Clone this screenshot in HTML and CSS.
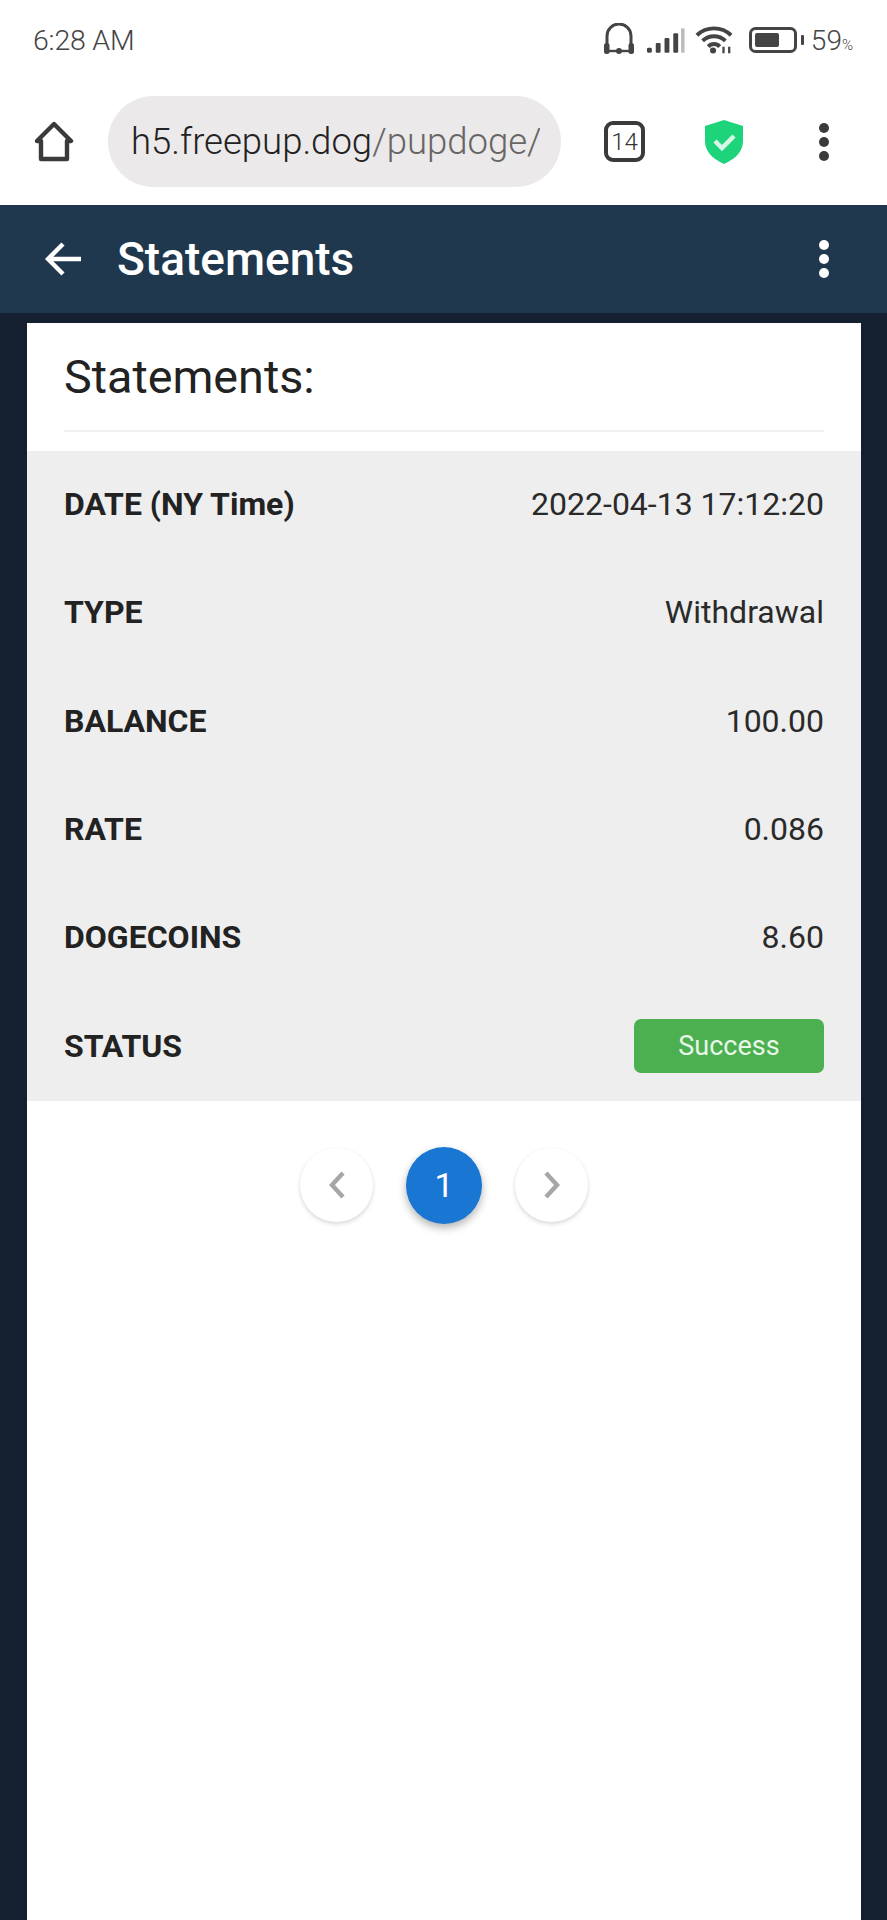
FILE: index.html
```html
<!DOCTYPE html>
<html lang="en">
<head>
<meta charset="utf-8">
<title>Statements</title>
<link rel="stylesheet" href="styles.css">
</head>
<body>
<div class="status">
  <span class="time">6:28 AM</span>
  <div class="status-icons">
    <svg class="i-head" viewBox="0 0 32 32"><path d="M4 27V13a12 12 0 0 1 24 0v14" fill="none" stroke="#444" stroke-width="3"/><path d="M4 28h24" stroke="#444" stroke-width="2.4"/><rect x="1" y="20" width="5.5" height="11" rx="2.5" fill="#444"/><rect x="25.5" y="20" width="5.5" height="11" rx="2.5" fill="#444"/><circle cx="16" cy="28" r="3" fill="#444"/></svg>
    <svg class="i-sig" viewBox="0 0 40 26"><g fill="#444"><rect x="1" y="20" width="5" height="5" rx="1.5"/><rect x="10" y="15" width="5" height="10" rx="1"/><rect x="19" y="10" width="5" height="15" rx="1"/><rect x="28" y="5" width="5" height="20" rx="1"/></g><rect x="36" y="0" width="3.5" height="25" fill="#bbb"/></svg>
    <svg class="i-wifi" viewBox="0 0 40 30"><g fill="none" stroke="#444" stroke-width="4.2"><path d="M2 10a26 26 0 0 1 36 0"/><path d="M8 16a17 17 0 0 1 24 0"/><path d="M14 22a8 8 0 0 1 12 0"/></g><circle cx="19" cy="26" r="3.2" fill="#444"/><path d="M30 22v7M36 22v7" stroke="#444" stroke-width="2.4"/></svg>
    <svg class="i-batt" viewBox="0 0 56 26"><rect x="1.5" y="1.5" width="45" height="23" rx="5" fill="none" stroke="#444" stroke-width="3"/><rect x="6" y="6" width="24" height="14" rx="2" fill="#444"/><rect x="52" y="8" width="3" height="10" rx="1" fill="#444"/></svg>
    <span class="pct">59<small>%</small></span>
  </div>
</div>
<div class="toolbar">
  <svg class="i-home" viewBox="0 0 42 42"><path d="M4 20 21 3l17 17h-4v18H8V20z" fill="none" stroke="#3a3a3a" stroke-width="4.4" stroke-linejoin="round"/></svg>
  <div class="url"><span class="url-inner"><span class="host">h5.freepup.dog</span><span class="path">/pupdoge/</span></span></div>
  <div class="tabs">14</div>
  <svg class="i-shield" viewBox="0 0 42 46"><path d="M21 1 40 7v15c0 11-8 18-19 23C10 40 2 33 2 22V7z" fill="#1ed47b"/><path d="m12 22 7 7 12-12" fill="none" stroke="#d9f7e8" stroke-width="4.5"/></svg>
  <svg class="i-dots" viewBox="0 0 12 38"><circle cx="6" cy="5" r="5" fill="#3a3a3a"/><circle cx="6" cy="19" r="5" fill="#3a3a3a"/><circle cx="6" cy="33" r="5" fill="#3a3a3a"/></svg>
</div>
<header class="appbar">
  <svg class="i-back" viewBox="0 0 38 34"><path d="M36 17H4M18 2 3 17l15 15" fill="none" stroke="#fff" stroke-width="4.4"/></svg>
  <h1 class="appbar-title">Statements</h1>
  <svg class="i-dots-w" viewBox="0 0 12 38"><circle cx="6" cy="5" r="5" fill="#fff"/><circle cx="6" cy="19" r="5" fill="#fff"/><circle cx="6" cy="33" r="5" fill="#fff"/></svg>
</header>
<main class="content">
  <section class="card">
    <div class="card-head"><h2 class="card-title">Statements:</h2></div>
    <div class="rows">
      <div class="row"><span class="label">DATE (NY Time)</span><span class="value">2022-04-13 17:12:20</span></div>
      <div class="row"><span class="label">TYPE</span><span class="value">Withdrawal</span></div>
      <div class="row"><span class="label">BALANCE</span><span class="value">100.00</span></div>
      <div class="row"><span class="label">RATE</span><span class="value">0.086</span></div>
      <div class="row"><span class="label">DOGECOINS</span><span class="value">8.60</span></div>
      <div class="row"><span class="label">STATUS</span><span class="badge">Success</span></div>
    </div>
    <nav class="pager">
      <span class="page-btn"><svg class="chev" viewBox="0 0 18 28"><path d="M15 2 4 14l11 12" fill="none" stroke="#a6a6a6" stroke-width="4.4"/></svg></span>
      <span class="page-now">1</span>
      <span class="page-btn"><svg class="chev" viewBox="0 0 18 28"><path d="m3 2 11 12L3 26" fill="none" stroke="#a6a6a6" stroke-width="4.4"/></svg></span>
    </nav>
  </section>
</main>
</body>
</html>
```
FILE: styles.css
```css
* { box-sizing: border-box; }
html, body { margin: 0; padding: 0; }
body { width: 887px; height: 1920px; overflow: hidden; background: #14202f; font-family: Roboto, "Liberation Sans", sans-serif; display: flex; flex-direction: column; }
.status { height: 80px; background: #fff; display: flex; justify-content: space-between; align-items: center; padding: 0 34px 0 33px; color: #444; }
.time { font-size: 28.5px; letter-spacing: -.2px; font-weight: 300; }
.status-icons { display: flex; align-items: center; }
.i-head { width: 32px; height: 32px; margin-right: 11px; margin-top: -2px; }
.i-sig { width: 39px; height: 26px; margin-right: 10px; margin-top: 2px; }
.i-wifi { width: 38px; height: 30px; margin-right: 16px; }
.i-batt { width: 56px; height: 26px; margin-right: 6px; }
.pct { font-size: 28px; font-weight: 300; }
.pct small { font-size: 15px; }
.toolbar { height: 125px; background: #fff; display: flex; align-items: center; padding: 0 0 2px 33px; }
.i-home { width: 42px; height: 42px; margin-right: 33px; }
.url { width: 453px; height: 91px; background: #ebe9e9; border-radius: 46px; padding: 0 21px 0 23px; display: flex; align-items: center; margin-right: 43px; }
.url-inner { display: block; overflow: hidden; white-space: nowrap; font-size: 36.5px; font-weight: 300; }
.host { color: #222; }
.path { color: #666; }
.tabs { width: 41px; height: 41px; border: 4px solid #3a3a3a; border-radius: 9px; font-size: 24px; font-weight: 300; color: #333; display: flex; align-items: center; justify-content: center; margin-right: 58px; }
.i-shield { width: 42px; height: 46px; margin-right: 73px; }
.i-dots { width: 12px; height: 38px; }
.appbar { height: 108px; background: #20384e; display: flex; align-items: center; padding: 0 33px 0 45px; }
.i-back { width: 38px; height: 34px; margin-right: 34px; }
.appbar-title { margin: 0; font-size: 46px; font-weight: 500; color: #fff; flex: 1; }
.i-dots-w { width: 12px; height: 38px; margin-right: 24px; }
.content { flex: 1; padding: 10px 26px 0 27px; min-height: 0; }
.card { background: #fff; height: 100%; }
.card-head { margin: 0 37px; height: 109px; border-bottom: 2px solid #f0f0f0; display: flex; align-items: center; }
.card-title { margin: 0; font-size: 46.7px; font-weight: 400; color: #222; }
.rows { margin-top: 19px; background: #eee; }
.row { height: 108.3px; padding: 0 37px 2px; display: flex; justify-content: space-between; align-items: center; font-size: 32px; color: #222; }
.label { font-weight: 700; }
.value { font-weight: 400; color: #2a2a2a; }
.badge { width: 190px; height: 54px; background: #4caf50; color: #e8f8e8; border-radius: 7px; font-size: 27px; display: flex; align-items: center; justify-content: center; }
.pager { display: flex; justify-content: center; align-items: center; margin-top: 46px; gap: 33px; }
.page-btn { width: 73px; height: 74px; border-radius: 50%; background: #fff; box-shadow: 0 2px 4px rgba(0,0,0,.16); display: flex; align-items: center; justify-content: center; }
.page-now { width: 76px; height: 77px; border-radius: 50%; background: #1976d2; color: #fff; font-size: 34px; display: flex; align-items: center; justify-content: center; box-shadow: 0 4px 8px rgba(0,0,0,.3); }
.chev { width: 18px; height: 28px; }
```
